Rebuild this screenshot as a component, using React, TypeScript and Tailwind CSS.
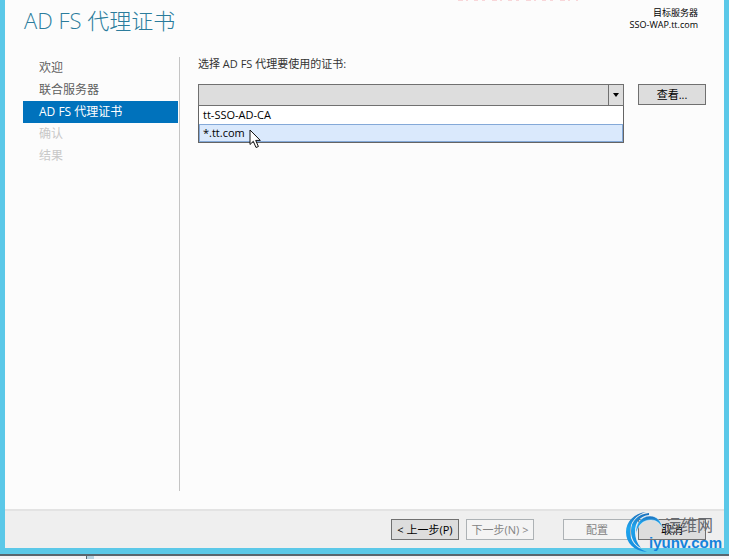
import React from "react";

const steps = [
  { label: "欢迎", state: "done" },
  { label: "联合服务器", state: "done" },
  { label: "AD FS 代理证书", state: "current" },
  { label: "确认", state: "pending" },
  { label: "结果", state: "pending" },
];

const stepStyle: Record<string, string> = {
  done: "text-[#5f5f5f]",
  current: "bg-[#0072bc] text-white",
  pending: "text-[#c8c8c8]",
};

function Steps() {
  return (
    <nav aria-label="步骤" className="w-[157px] shrink-0 border-r border-[#c4c4c4] pr-px">
      <ol>
        {steps.map((s) => (
          <li
            key={s.label}
            aria-current={s.state === "current" ? "step" : undefined}
            className={`h-[22px] pl-4 text-[12px] leading-[22px] ${stepStyle[s.state]}`}
          >
            {s.label}
          </li>
        ))}
      </ol>
    </nav>
  );
}

function DialogButton({ children, disabled = false }: { children: React.ReactNode; disabled?: boolean }) {
  return (
    <button
      type="button"
      disabled={disabled}
      className="h-[21px] w-[68px] shrink-0 border border-[#707070] bg-[#dddddd] text-center text-[11px] leading-[19px] whitespace-nowrap text-black disabled:border-[#adb2b5] disabled:bg-[#f4f4f4] disabled:text-[#838383]"
    >
      {children}
    </button>
  );
}

function CertificatePicker() {
  return (
    <div className="relative min-w-0 flex-1">
      <select
        id="certificate"
        defaultValue=""
        className="block h-[22px] w-full appearance-none border border-[#707070] bg-[#dddddd] px-1 text-[11px]"
      >
        <option value=""></option>
        <option>tt-SSO-AD-CA</option>
        <option>*.tt.com</option>
      </select>
      <span className="pointer-events-none absolute top-0 right-0 flex h-[22px] w-4 items-center justify-center border border-[#707070]">
        <svg width="6" height="4" viewBox="0 0 6 4" aria-hidden="true">
          <path d="M0 0h6L3 4z" fill="#000" />
        </svg>
      </span>
      <ul
        role="listbox"
        aria-label="证书"
        className="absolute top-full right-0 left-0 border border-t-0 border-[#646464] bg-white text-[11px] text-black"
      >
        <li role="option" aria-selected="false" className="h-[18px] px-1 leading-[18px]">
          tt-SSO-AD-CA
        </li>
        <li role="option" aria-selected="true" className="h-[18px] border border-[#84a9d8] bg-[#dae9fc] px-[3px] leading-[16px]">
          *.tt.com
        </li>
      </ul>
      <svg className="absolute top-[45px] left-[51px]" width="13" height="20" viewBox="0 0 13 20" aria-hidden="true">
        <path
          d="M1 1v14.5l3.3-3.2 2.7 6.2 2.4-1-2.7-6.1h4.6z"
          fill="#fff"
          stroke="#111"
          strokeWidth="1"
        />
      </svg>
    </div>
  );
}

function Watermark() {
  return (
    <div className="pointer-events-none absolute right-0 -bottom-1 h-10 w-[98px]" aria-label="运维网 iyunv.com">
      <svg className="absolute top-0 left-0" width="40" height="40" viewBox="0 0 40 40" aria-hidden="true">
        <defs>
          <linearGradient id="swirl" x1="0" y1="0" x2="0" y2="1">
            <stop offset="0" stopColor="#1b6fbc" />
            <stop offset="0.4" stopColor="#1fa6ee" />
            <stop offset="1" stopColor="#148add" />
          </linearGradient>
        </defs>
        <path d="M20 0C8 1 0 10 0 20c0 11 8 19 21 20C10 36 4 29 4 20 4 10 10 3 20 0z" fill="url(#swirl)" />
        <path d="M23 1C12 2 5 9 5 19c0 8 4 14 10 17-4-5-6-10-6-16C9 10 14 4 23 3z" fill="url(#swirl)" />
        <path d="M10 22C9 12 15 4 24 4c7 0 11 5 13 13-3-6-7-9-12-9-8 0-13 5-15 14z" fill="url(#swirl)" stroke="#e6f4fc" strokeWidth="0.5" />
      </svg>
      <span className="absolute top-0.5 left-[39px] text-[16px] leading-[22px] whitespace-nowrap text-[#66696f]">运维网</span>
      <span className="absolute top-5 left-[23px] font-['Liberation_Sans',sans-serif] text-[15px] leading-[22px] font-bold whitespace-nowrap text-[#1483dc]">
        iyunv.com
      </span>
    </div>
  );
}

export default function App() {
  return (
    <div className="flex h-screen flex-col overflow-hidden bg-[#f3f2f6] font-['Open_Sans','Noto_Sans_CJK_SC',sans-serif]">
      <div className="relative flex min-h-0 flex-1 flex-col border-x-[5px] border-b-[6px] border-[#5bc8e8] bg-[#fcfcfc]">
        <svg className="absolute top-0 right-[146px]" width="120" height="1" viewBox="0 0 120 1" aria-hidden="true">
          <path d="M0 .5h120" stroke="#f8d6d9" strokeWidth="1" strokeDasharray="5 3 2 6 4 4 3 7" />
        </svg>
        <header className="flex h-[57px] shrink-0 items-start justify-between pr-[26px] pl-[19px]">
          <h1 className="pt-1 text-[22px] leading-8 font-light text-[#2b7c9c]">AD FS 代理证书</h1>
          <div className="pt-[7px] text-right text-[9px] leading-[12px] text-black">
            <p>目标服务器</p>
            <p>SSO-WAP.tt.com</p>
          </div>
        </header>

        <div className="flex min-h-0 flex-1 pr-[18px] pb-[18px] pl-[18px]">
          <Steps />
          <main className="min-w-0 flex-1 pl-[18px]">
            <label htmlFor="certificate" className="block h-[27px] text-[11px] leading-[13px] text-[#333333]">
              选择 AD FS 代理要使用的证书:
            </label>
            <div className="flex gap-[14px]">
              <CertificatePicker />
              <DialogButton>查看...</DialogButton>
            </div>
          </main>
        </div>

        <footer className="flex h-[39px] shrink-0 justify-end border-t-2 border-[#e3e3e3] bg-[#efefef] pt-2 pr-[18px]">
          <div className="flex gap-[7px]">
            <DialogButton>&lt; 上一步(P)</DialogButton>
            <DialogButton disabled>下一步(N) &gt;</DialogButton>
          </div>
          <div className="ml-[29px] flex gap-[7px]">
            <DialogButton disabled>配置</DialogButton>
            <DialogButton>取消</DialogButton>
          </div>
        </footer>
        <Watermark />
      </div>
      <div className="flex h-[5px] shrink-0 border-t-2 border-[#59656e]">
        <div className="w-[87px] border-r border-[#59656e]" />
        <div className="w-[7px] bg-[#b9d3e2]" />
      </div>
    </div>
  );
}
